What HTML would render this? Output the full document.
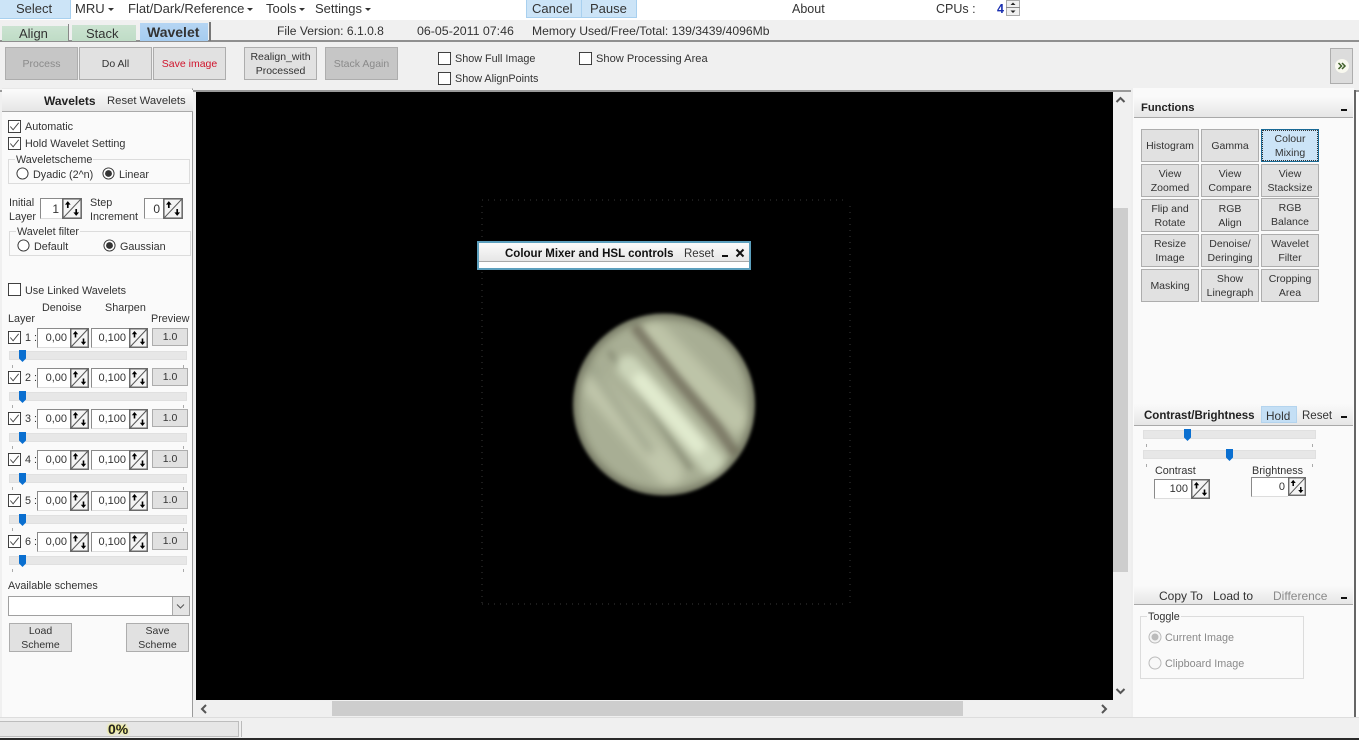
<!DOCTYPE html>
<html><head><meta charset="utf-8"><style>
html,body{margin:0;padding:0;width:1359px;height:740px;overflow:hidden;background:#f0f0f0}
body{position:relative;font-family:"Liberation Sans",sans-serif;font-size:11px;color:#222}
div,svg{position:absolute}
.t{position:absolute;white-space:nowrap;line-height:14px;color:#333}
.s{font-size:10.8px;margin-top:1px}
.m{font-size:13px;line-height:16px;color:#333;margin-top:1px}
.ar{display:inline-block;width:0;height:0;border-left:3px solid transparent;border-right:3px solid transparent;border-top:3px solid #333;margin-left:3px;vertical-align:2px}
.b{position:absolute;box-sizing:border-box;background:#e1e1e1;border:1px solid #adadad;text-align:center;font-size:10.5px;line-height:14px;color:#333;display:flex;align-items:center;justify-content:center}
.h{position:absolute;box-sizing:border-box;background:linear-gradient(#fbfbfb,#e6e6e6);border-bottom:1px solid #a9a9a9}
.f{position:absolute;box-sizing:border-box;background:#fff;border:1px solid #8a8a8a;border-right:0;border-bottom-color:#ddd;text-align:right;line-height:18px;color:#333;font-size:11px;padding-right:3px}
.tr{position:absolute;background:#e7e7e7;border:1px solid #e0e0e0;box-sizing:border-box;height:9px}
.th{position:absolute;width:7px;height:12px}
.g{position:absolute;box-sizing:border-box;border:1px solid #dcdcdc}
.tick{position:absolute;width:1px;height:3px;background:#aaa}
</style></head><body>
<svg width="0" height="0" style="position:absolute"><defs>
<symbol id="sp" viewBox="0 0 19 20"><rect x=".75" y=".75" width="17.5" height="18.5" fill="#f4f4f4" stroke="#6a6a6a" stroke-width="1.5"/><path d="M1.500 18.500L17.500 1.500" stroke="#555" stroke-width="1"/><path d="M5.500 9.500V5" stroke="#000" stroke-width="1.600"/><path d="M2.800 6.300L5.500 3L8.200 6.300Z" fill="#000"/><path d="M13.500 10.500V15" stroke="#000" stroke-width="1.600"/><path d="M10.800 13.700L13.500 17L16.200 13.700Z" fill="#000"/></symbol>
<symbol id="ck" viewBox="0 0 14 14"><rect x=".5" y=".5" width="13" height="13" fill="#fff" stroke="#333"/><path d="M2.500 7L5.500 10.500L11.500 3" fill="none" stroke="#444" stroke-width="1"/></symbol>
<symbol id="uk" viewBox="0 0 14 14"><rect x=".5" y=".5" width="13" height="13" fill="#fff" stroke="#333"/></symbol>
<symbol id="r0" viewBox="0 0 14 14"><circle cx="7" cy="7" r="6" fill="#fff" stroke="#333"/></symbol>
<symbol id="r1" viewBox="0 0 14 14"><circle cx="7" cy="7" r="6" fill="#fff" stroke="#333"/><circle cx="7" cy="7" r="3.700" fill="#333"/></symbol>
<symbol id="tb" viewBox="0 0 7 12"><path d="M0 0H7V8.500L3.500 12L0 8.500Z" fill="#0a6fd0"/></symbol>
</defs></svg>

<!-- top menu -->
<div style="left:0;top:0;width:1359px;height:20px;background:#fff"></div>
<div style="left:0;top:0;width:70px;height:18px;background:#cce4f7;border-right:1px solid #a8d0ef;border-bottom:1px solid #a8d0ef"></div>
<div class="t m" style="left:16px;top:0">Select</div>
<div class="t m" style="left:75px;top:0">MRU<span class="ar"></span></div>
<div class="t m" style="left:128px;top:0">Flat/Dark/Reference<span class="ar"></span></div>
<div class="t m" style="left:266px;top:0">Tools<span class="ar"></span></div>
<div class="t m" style="left:315px;top:0">Settings<span class="ar"></span></div>
<div style="left:526px;top:0;width:55px;height:17px;background:#cce4f7;border:1px solid #a8d0ef;border-top:0"></div>
<div style="left:581px;top:0;width:54px;height:17px;background:#cce4f7;border:1px solid #a8d0ef;border-top:0"></div>
<div class="t m" style="left:532px;top:0">Cancel</div>
<div class="t m" style="left:590px;top:0">Pause</div>
<div class="t m" style="left:792px;top:0;font-size:12.500px">About</div>
<div class="t m" style="left:936px;top:0;font-size:12.500px">CPUs :</div>
<div class="t m" style="left:997px;top:0;font-size:12.500px;color:#1a2fb0;font-weight:bold">4</div>
<div style="left:1006px;top:0;width:14px;height:16px;background:#efefef;border:1px solid #aaa;box-sizing:border-box"></div>
<div style="left:1006px;top:7px;width:14px;height:1px;background:#888"></div>
<svg style="left:1006px;top:0" width="14" height="16"><path d="M4.500 5L7 2.500L9.500 5ZM4.500 10.500L7 13L9.500 10.500Z" fill="#222"/></svg>

<!-- tab row -->
<div style="left:0;top:20px;width:1359px;height:20px;background:#f0f0f0"></div>
<div style="left:0;top:40px;width:1359px;height:2px;background:#8f8f8f"></div>
<div style="left:2px;top:26px;width:66px;height:15px;background:linear-gradient(#cbe3d1,#bfdcc6)"></div>
<div style="left:68px;top:24px;width:1px;height:16px;background:#888"></div>
<div style="left:72px;top:25px;width:64px;height:16px;background:linear-gradient(#cbe3d1,#bfdcc6)"></div>
<div style="left:140px;top:23px;width:68px;height:18px;background:linear-gradient(#b5d5f3,#a5ccf0)"></div>
<div style="left:209px;top:22px;width:2px;height:19px;background:#777"></div>
<div class="t m" style="left:19px;top:25px">Align</div>
<div class="t m" style="left:86px;top:25px">Stack</div>
<div class="t m" style="left:147px;top:23px;font-weight:bold;font-size:14px">Wavelet</div>
<div class="t" style="left:277px;top:24px;font-size:12.100px">File Version: 6.1.0.8</div>
<div class="t" style="left:417px;top:24px;font-size:12.400px">06-05-2011 07:46</div>
<div class="t" style="left:532px;top:24px;font-size:12.150px">Memory Used/Free/Total: 139/3439/4096Mb</div>

<!-- toolbar -->
<div class="b" style="left:5px;top:47px;width:73px;height:33px;background:#c6c6c6;color:#8a8a8a">Process</div>
<div class="b" style="left:79px;top:47px;width:73px;height:33px">Do All</div>
<div class="b" style="left:153px;top:47px;width:73px;height:33px;color:#d0142c">Save image</div>
<div class="b" style="left:244px;top:47px;width:73px;height:33px">Realign_with<br>Processed</div>
<div class="b" style="left:325px;top:47px;width:73px;height:33px;background:#c6c6c6;color:#8a8a8a">Stack Again</div>
<svg style="left:438px;top:52px" width="13" height="13"><use href="#uk"/></svg>
<svg style="left:438px;top:72px" width="13" height="13"><use href="#uk"/></svg>
<svg style="left:579px;top:52px" width="13" height="13"><use href="#uk"/></svg>
<div class="t s" style="left:455px;top:51px">Show Full Image</div>
<div class="t s" style="left:455px;top:71px">Show AlignPoints</div>
<div class="t s" style="left:596px;top:51px;font-size:11.100px">Show Processing Area</div>
<div style="left:1330px;top:48px;width:23px;height:36px;box-sizing:border-box;background:#dcdcdc;border:1px solid #adadad"></div>
<svg style="left:1334px;top:58px" width="16" height="16"><circle cx="8" cy="8" r="7" fill="#f8f8ef"/><path d="M4.500 5L7.500 8L4.500 11M8 5L11 8L8 11" fill="none" stroke="#40602a" stroke-width="1.500"/></svg>

<div style="left:0;top:90px;width:1359px;height:2px;background:#9a9a9a"></div>

<!-- left panel -->
<div style="left:2px;top:88px;width:191px;height:629px;background:#fafafa;border-right:1px solid #9a9a9a;border-top:1px solid #e8e8e8;box-sizing:border-box"></div>
<div class="h" style="left:2px;top:90px;width:191px;height:22px"></div>
<div class="t" style="left:44px;top:94px;font-weight:bold;color:#222;font-size:12px;margin-top:0">Wavelets</div>
<div class="t" style="left:107px;top:94px;font-size:11.300px">Reset Wavelets</div>

<svg style="left:8px;top:120px" width="13" height="13"><use href="#ck"/></svg>
<div class="t s" style="left:25px;top:119px">Automatic</div>
<svg style="left:8px;top:137px" width="13" height="13"><use href="#ck"/></svg>
<div class="t s" style="left:25px;top:136px">Hold Wavelet Setting</div>

<div class="g" style="left:8px;top:159px;width:182px;height:25px"></div>
<div class="t s" style="left:15px;top:152px;background:#fafafa;padding:0 1px">Waveletscheme</div>
<svg style="left:16px;top:167px" width="13" height="13"><use href="#r0"/></svg>
<div class="t s" style="left:33px;top:167px">Dyadic (2^n)</div>
<svg style="left:102px;top:167px" width="13" height="13"><use href="#r1"/></svg>
<div class="t s" style="left:119px;top:167px">Linear</div>

<div class="t s" style="left:9px;top:195px">Initial</div>
<div class="t s" style="left:9px;top:209px">Layer</div>
<div class="f" style="left:40px;top:198px;width:22px;height:21px;font-size:12px;line-height:20px">1</div>
<svg style="left:62px;top:198px" width="20" height="21"><use href="#sp"/></svg>
<div class="t s" style="left:90px;top:195px">Step</div>
<div class="t s" style="left:90px;top:209px">Increment</div>
<div class="f" style="left:144px;top:198px;width:19px;height:21px;font-size:12px;line-height:20px">0</div>
<svg style="left:163px;top:198px" width="20" height="21"><use href="#sp"/></svg>

<div class="g" style="left:9px;top:231px;width:182px;height:25px"></div>
<div class="t s" style="left:16px;top:224px;background:#fafafa;padding:0 1px">Wavelet filter</div>
<svg style="left:17px;top:239px" width="13" height="13"><use href="#r0"/></svg>
<div class="t s" style="left:34px;top:239px">Default</div>
<svg style="left:103px;top:239px" width="13" height="13"><use href="#r1"/></svg>
<div class="t s" style="left:120px;top:239px">Gaussian</div>

<svg style="left:8px;top:283px" width="13" height="13"><use href="#uk"/></svg>
<div class="t s" style="left:25px;top:283px">Use Linked Wavelets</div>
<div class="t s" style="left:42px;top:300px">Denoise</div>
<div class="t s" style="left:105px;top:300px">Sharpen</div>
<div class="t s" style="left:8px;top:311px">Layer</div>
<div class="t s" style="left:151px;top:311px">Preview</div>

<!-- layer 1 -->
<svg style="left:8px;top:331px" width="13" height="13"><use href="#ck"/></svg><div class="t s" style="left:25px;top:330px">1 :</div>
<div class="f" style="left:37px;top:328px;width:33px;height:20px">0,00</div><svg style="left:70px;top:328px" width="19" height="20"><use href="#sp"/></svg>
<div class="f" style="left:91px;top:328px;width:38px;height:20px">0,100</div><svg style="left:129px;top:328px" width="19" height="20"><use href="#sp"/></svg>
<div class="b" style="left:152px;top:328px;width:36px;height:18px">1.0</div>
<div class="tr" style="left:9px;top:351px;width:178px"></div><svg class="th" style="left:19px;top:350px" width="7" height="12"><use href="#tb"/></svg>
<div class="tick" style="left:12px;top:365px"></div><div class="tick" style="left:183px;top:365px"></div>
<!-- layer 2 -->
<svg style="left:8px;top:371px" width="13" height="13"><use href="#ck"/></svg><div class="t s" style="left:25px;top:370px">2 :</div>
<div class="f" style="left:37px;top:368px;width:33px;height:20px">0,00</div><svg style="left:70px;top:368px" width="19" height="20"><use href="#sp"/></svg>
<div class="f" style="left:91px;top:368px;width:38px;height:20px">0,100</div><svg style="left:129px;top:368px" width="19" height="20"><use href="#sp"/></svg>
<div class="b" style="left:152px;top:368px;width:36px;height:18px">1.0</div>
<div class="tr" style="left:9px;top:392px;width:178px"></div><svg class="th" style="left:19px;top:391px" width="7" height="12"><use href="#tb"/></svg>
<div class="tick" style="left:12px;top:405px"></div><div class="tick" style="left:183px;top:405px"></div>
<!-- layer 3 -->
<svg style="left:8px;top:412px" width="13" height="13"><use href="#ck"/></svg><div class="t s" style="left:25px;top:411px">3 :</div>
<div class="f" style="left:37px;top:409px;width:33px;height:20px">0,00</div><svg style="left:70px;top:409px" width="19" height="20"><use href="#sp"/></svg>
<div class="f" style="left:91px;top:409px;width:38px;height:20px">0,100</div><svg style="left:129px;top:409px" width="19" height="20"><use href="#sp"/></svg>
<div class="b" style="left:152px;top:409px;width:36px;height:18px">1.0</div>
<div class="tr" style="left:9px;top:433px;width:178px"></div><svg class="th" style="left:19px;top:432px" width="7" height="12"><use href="#tb"/></svg>
<div class="tick" style="left:12px;top:446px"></div><div class="tick" style="left:183px;top:446px"></div>
<!-- layer 4 -->
<svg style="left:8px;top:453px" width="13" height="13"><use href="#ck"/></svg><div class="t s" style="left:25px;top:452px">4 :</div>
<div class="f" style="left:37px;top:450px;width:33px;height:20px">0,00</div><svg style="left:70px;top:450px" width="19" height="20"><use href="#sp"/></svg>
<div class="f" style="left:91px;top:450px;width:38px;height:20px">0,100</div><svg style="left:129px;top:450px" width="19" height="20"><use href="#sp"/></svg>
<div class="b" style="left:152px;top:450px;width:36px;height:18px">1.0</div>
<div class="tr" style="left:9px;top:474px;width:178px"></div><svg class="th" style="left:19px;top:473px" width="7" height="12"><use href="#tb"/></svg>
<div class="tick" style="left:12px;top:487px"></div><div class="tick" style="left:183px;top:487px"></div>
<!-- layer 5 -->
<svg style="left:8px;top:494px" width="13" height="13"><use href="#ck"/></svg><div class="t s" style="left:25px;top:493px">5 :</div>
<div class="f" style="left:37px;top:491px;width:33px;height:20px">0,00</div><svg style="left:70px;top:491px" width="19" height="20"><use href="#sp"/></svg>
<div class="f" style="left:91px;top:491px;width:38px;height:20px">0,100</div><svg style="left:129px;top:491px" width="19" height="20"><use href="#sp"/></svg>
<div class="b" style="left:152px;top:491px;width:36px;height:18px">1.0</div>
<div class="tr" style="left:9px;top:515px;width:178px"></div><svg class="th" style="left:19px;top:514px" width="7" height="12"><use href="#tb"/></svg>
<div class="tick" style="left:12px;top:528px"></div><div class="tick" style="left:183px;top:528px"></div>
<!-- layer 6 -->
<svg style="left:8px;top:535px" width="13" height="13"><use href="#ck"/></svg><div class="t s" style="left:25px;top:534px">6 :</div>
<div class="f" style="left:37px;top:532px;width:33px;height:20px">0,00</div><svg style="left:70px;top:532px" width="19" height="20"><use href="#sp"/></svg>
<div class="f" style="left:91px;top:532px;width:38px;height:20px">0,100</div><svg style="left:129px;top:532px" width="19" height="20"><use href="#sp"/></svg>
<div class="b" style="left:152px;top:532px;width:36px;height:18px">1.0</div>
<div class="tr" style="left:9px;top:556px;width:178px"></div><svg class="th" style="left:19px;top:555px" width="7" height="12"><use href="#tb"/></svg>
<div class="tick" style="left:12px;top:569px"></div><div class="tick" style="left:183px;top:569px"></div>

<div class="t s" style="left:8px;top:578px">Available schemes</div>
<div style="left:8px;top:596px;width:182px;height:20px;box-sizing:border-box;background:#fff;border:1px solid #a0a0a0"></div>
<div style="left:172px;top:597px;width:17px;height:18px;background:#e4e4e4;border-left:1px solid #aaa;box-sizing:border-box"></div>
<svg style="left:172px;top:597px" width="17" height="18"><path d="M5 7.500L8.500 11L12 7.500" fill="none" stroke="#555"/></svg>
<div class="b" style="left:9px;top:623px;width:63px;height:29px">Load<br>Scheme</div>
<div class="b" style="left:126px;top:623px;width:63px;height:29px">Save<br>Scheme</div>

<!-- image -->
<div style="left:196px;top:92px;width:917px;height:608px;background:#000"></div>
<svg style="left:196px;top:92px;overflow:hidden" width="917" height="608" viewBox="196 92 917 608">
<defs>
<clipPath id="pc"><circle cx="664" cy="404.500" r="91"/></clipPath>
<filter id="bl" x="-30%" y="-30%" width="160%" height="160%"><feGaussianBlur stdDeviation="5"/></filter>
<filter id="bl2" x="-30%" y="-30%" width="160%" height="160%"><feGaussianBlur stdDeviation="3"/></filter>
<filter id="bl5" x="-30%" y="-30%" width="160%" height="160%"><feGaussianBlur stdDeviation="4"/></filter>
<filter id="bl3" x="-10%" y="-10%" width="120%" height="120%"><feGaussianBlur stdDeviation="1.500"/></filter>
<filter id="bl4" x="-30%" y="-30%" width="160%" height="160%"><feGaussianBlur stdDeviation="4"/></filter>
</defs>
<path d="M482 200H846M482 604H846M482 206V604M850 206V604" fill="none" stroke="#262626" stroke-width="1.500" stroke-dasharray="1 5"/>
<g filter="url(#bl3)"><g clip-path="url(#pc)">
<rect x="560" y="300" width="210" height="210" fill="#a8ae94"/>
<g filter="url(#bl)" fill="none" stroke-linecap="round">
<path d="M653 333L737 420" stroke="#bec4a8" stroke-width="26"/>
<path d="M597 387L670 473" stroke="#c1c7ac" stroke-width="26"/>
<path d="M585 360L650 450" stroke="#9ca38a" stroke-width="8"/>
</g>
<g filter="url(#bl2)" fill="none" stroke-linecap="round">
<path d="M637 330L677 380L717 427L733 450" stroke="#7e7b67" stroke-width="11"/>
<path d="M610 353L640 393L690 467" stroke="#8d927a" stroke-width="6"/>
</g>
<g filter="url(#bl5)" fill="none" stroke-linecap="round">
<path d="M628 367L667 410L714 465" stroke="#ccd5b9" stroke-width="24"/>
<path d="M640 380L698 446" stroke="#e2ebcf" stroke-width="14"/>
</g>
<circle cx="664" cy="404.500" r="91" fill="none" stroke="#3e4032" stroke-width="9" stroke-opacity=".55" filter="url(#bl4)"/>
</g></g>
</svg>

<!-- floating dialog -->
<div style="left:477px;top:241px;width:274px;height:29px;box-sizing:border-box;background:#fff;border:2px solid #5c9fbd"></div>
<div class="h" style="left:479px;top:243px;width:270px;height:19px"></div>
<div class="t" style="left:505px;top:247px;font-weight:bold;color:#111;font-size:11.500px">Colour Mixer and HSL controls</div>
<div class="t" style="left:684px;top:247px;font-size:11.500px">Reset</div>
<div style="left:722px;top:255px;width:6px;height:2px;background:#111"></div>
<svg style="left:735px;top:248px" width="10" height="10"><path d="M1.500 1.500L8.500 8.500M8.500 1.500L1.500 8.500" stroke="#111" stroke-width="2"/></svg>

<!-- vertical scrollbar -->
<div style="left:1113px;top:92px;width:18px;height:608px;background:#f0f0f0"></div>
<div style="left:1113px;top:208px;width:15px;height:364px;background:#cdcdcd"></div>
<svg style="left:1113px;top:94px" width="15" height="12"><path d="M3.500 8L7.500 4L11.500 8" fill="none" stroke="#555" stroke-width="2"/></svg>
<svg style="left:1113px;top:685px" width="15" height="12"><path d="M3.500 4L7.500 8L11.500 4" fill="none" stroke="#555" stroke-width="2"/></svg>
<!-- horizontal scrollbar -->
<div style="left:196px;top:700px;width:935px;height:17px;background:#f0f0f0"></div>
<div style="left:332px;top:701px;width:631px;height:15px;background:#cdcdcd"></div>
<svg style="left:198px;top:702px" width="12" height="14"><path d="M8 3L4 7L8 11" fill="none" stroke="#555" stroke-width="2"/></svg>
<svg style="left:1098px;top:702px" width="12" height="14"><path d="M4 3L8 7L4 11" fill="none" stroke="#555" stroke-width="2"/></svg>

<!-- right panel -->
<div style="left:1131px;top:88px;width:223px;height:630px;background:#fafafa;border-left:2px solid #eee;box-sizing:border-box"></div>
<div style="left:1354px;top:90px;width:2px;height:628px;background:#666"></div>
<div style="left:1356px;top:92px;width:3px;height:626px;background:#fff"></div>
<div class="h" style="left:1134px;top:96px;width:219px;height:22px"></div>
<div class="t" style="left:1141px;top:101px;font-weight:bold;color:#222;font-size:11.200px">Functions</div>
<div style="left:1341px;top:109px;width:6px;height:2px;background:#111"></div>

<div class="b" style="left:1141px;top:129px;width:58px;height:33px">Histogram</div>
<div class="b" style="left:1201px;top:129px;width:58px;height:33px">Gamma</div>
<div class="b" style="left:1261px;top:129px;width:58px;height:33px;background:#cce4f7;border:1px solid #1a6a96;outline:1px dotted #333;outline-offset:-2px">Colour<br>Mixing</div>
<div class="b" style="left:1141px;top:164px;width:58px;height:33px">View<br>Zoomed</div>
<div class="b" style="left:1201px;top:164px;width:58px;height:33px">View<br>Compare</div>
<div class="b" style="left:1261px;top:164px;width:58px;height:33px">View<br>Stacksize</div>
<div class="b" style="left:1141px;top:199px;width:58px;height:33px">Flip and<br>Rotate</div>
<div class="b" style="left:1201px;top:199px;width:58px;height:33px">RGB<br>Align</div>
<div class="b" style="left:1261px;top:198px;width:58px;height:33px">RGB<br>Balance</div>
<div class="b" style="left:1141px;top:234px;width:58px;height:33px">Resize<br>Image</div>
<div class="b" style="left:1201px;top:234px;width:58px;height:33px">Denoise/<br>Deringing</div>
<div class="b" style="left:1261px;top:234px;width:58px;height:33px">Wavelet<br>Filter</div>
<div class="b" style="left:1141px;top:269px;width:58px;height:33px">Masking</div>
<div class="b" style="left:1201px;top:269px;width:58px;height:33px">Show<br>Linegraph</div>
<div class="b" style="left:1261px;top:269px;width:58px;height:33px">Cropping<br>Area</div>

<div class="h" style="left:1134px;top:403px;width:219px;height:23px"></div>
<div style="left:1261px;top:406px;width:36px;height:17px;background:#c4dff5;border:1px solid #b4d4ee;box-sizing:border-box"></div>
<div class="t" style="left:1144px;top:409px;font-weight:bold;color:#222;font-size:11.500px">Contrast/Brightness</div>
<div class="t" style="left:1266px;top:409px;font-size:11.800px">Hold</div>
<div class="t" style="left:1302px;top:409px;font-size:11.500px">Reset</div>
<div style="left:1341px;top:416px;width:6px;height:2px;background:#111"></div>

<div class="tr" style="left:1143px;top:430px;width:173px"></div><svg class="th" style="left:1184px;top:429px" width="7" height="12"><use href="#tb"/></svg>
<div class="tick" style="left:1146px;top:444px"></div><div class="tick" style="left:1312px;top:444px"></div>
<div class="tr" style="left:1143px;top:450px;width:173px"></div><svg class="th" style="left:1226px;top:449px" width="7" height="12"><use href="#tb"/></svg>
<div class="tick" style="left:1146px;top:464px"></div><div class="tick" style="left:1312px;top:464px"></div>
<div class="t s" style="left:1155px;top:463px">Contrast</div>
<div class="t s" style="left:1252px;top:463px">Brightness</div>
<div class="f" style="left:1154px;top:479px;width:37px;height:20px">100</div><svg style="left:1191px;top:479px" width="19" height="20"><use href="#sp"/></svg>
<div class="f" style="left:1251px;top:477px;width:37px;height:20px">0</div><svg style="left:1288px;top:477px" width="18" height="19"><use href="#sp"/></svg>

<div class="h" style="left:1134px;top:585px;width:219px;height:20px"></div>
<div class="t" style="left:1159px;top:589px;font-size:12px">Copy To</div>
<div class="t" style="left:1213px;top:589px;font-size:12px">Load to</div>
<div class="t" style="left:1273px;top:589px;font-size:12px;color:#8a8a8a">Difference</div>
<div style="left:1341px;top:597px;width:6px;height:2px;background:#111"></div>

<div class="g" style="left:1140px;top:616px;width:164px;height:63px"></div>
<div class="t s" style="left:1147px;top:609px;background:#fafafa;padding:0 1px">Toggle</div>
<svg style="left:1148px;top:630px" width="14" height="14"><circle cx="7" cy="7" r="6" fill="#f4f4f4" stroke="#bbb"/><circle cx="7" cy="7" r="3.500" fill="#bbb"/></svg>
<svg style="left:1148px;top:656px" width="14" height="14"><circle cx="7" cy="7" r="6" fill="#f8f8f8" stroke="#bbb"/></svg>
<div class="t s" style="left:1165px;top:630px;color:#8a8a8a">Current Image</div>
<div class="t s" style="left:1165px;top:656px;color:#8a8a8a">Clipboard Image</div>

<!-- status -->
<div style="left:0;top:717px;width:1359px;height:21px;background:#f0f0f0;border-top:1px solid #ddd;box-sizing:border-box"></div>
<div style="left:0;top:721px;width:239px;height:16px;background:#e6e6e6;border:1px solid #bdbdbd;border-left:0;box-sizing:border-box"></div>
<div style="left:241px;top:721px;width:1px;height:16px;background:#bbb"></div>
<div class="t" style="left:108px;top:722px;font-weight:bold;font-size:14px;color:#222;text-shadow:0 0 3px #f4f06a,0 0 2px #f4f06a">0%</div>
<div style="left:0;top:738px;width:1359px;height:2px;background:#2a2a2a"></div>
</body></html>
